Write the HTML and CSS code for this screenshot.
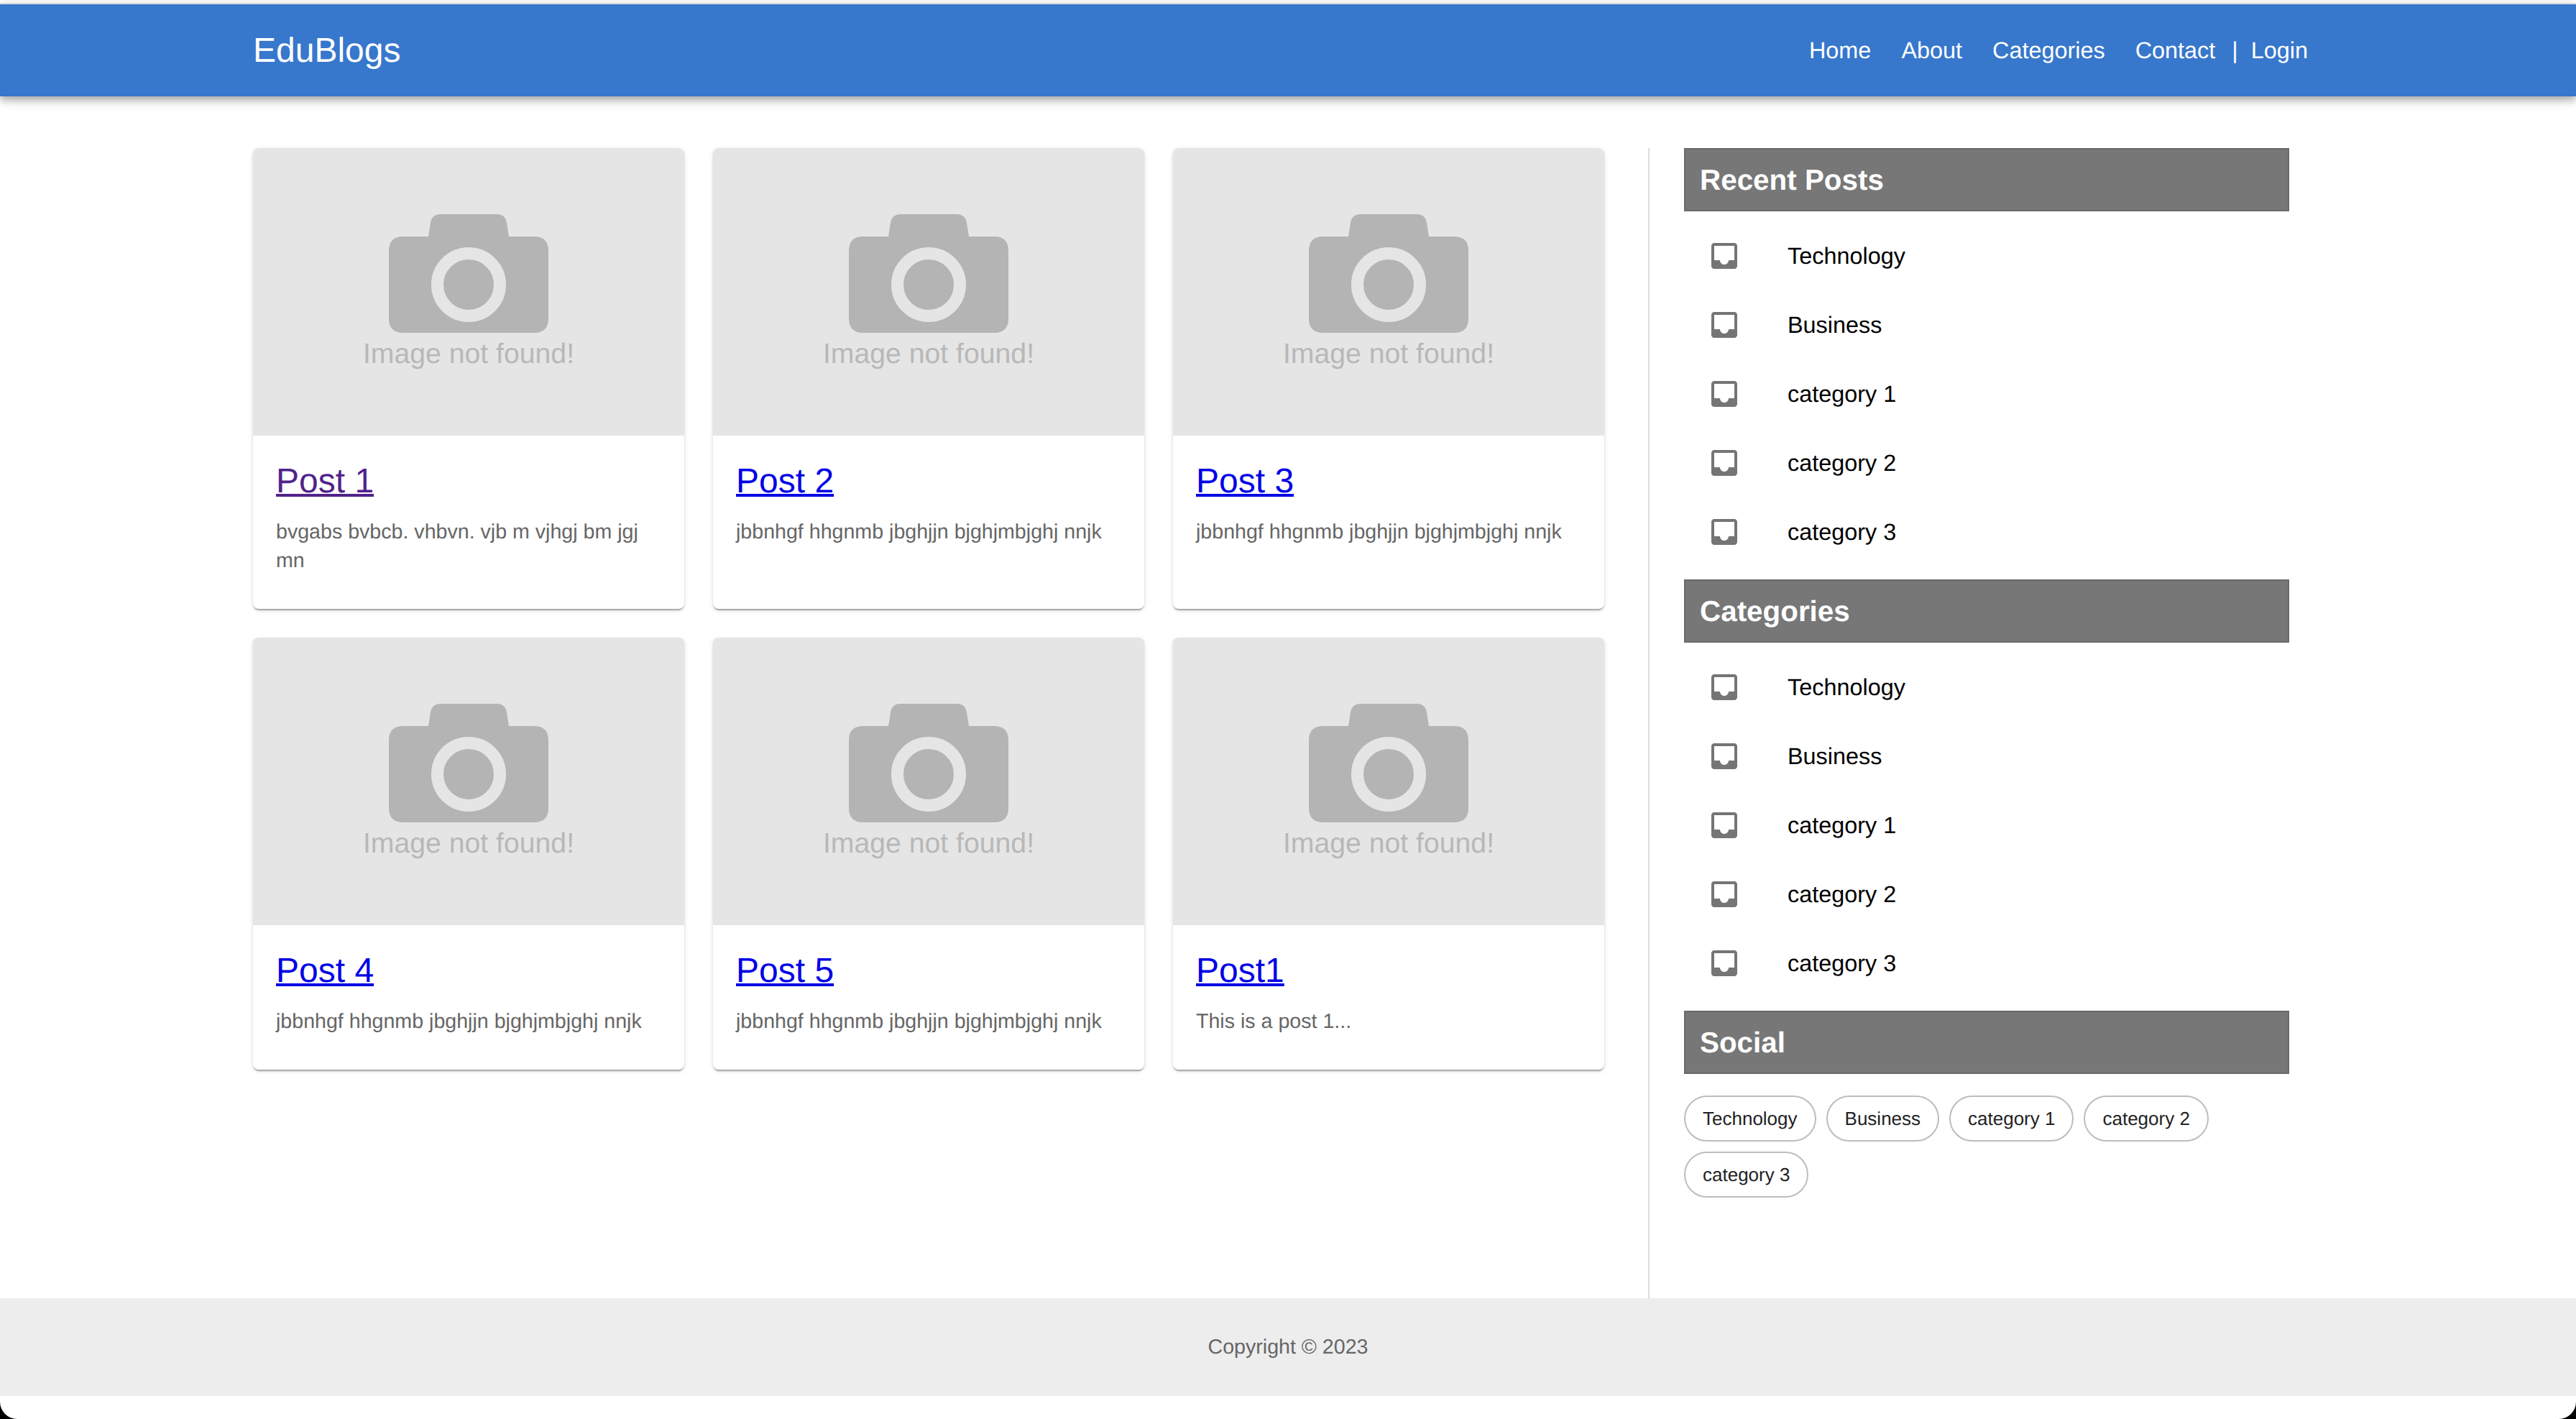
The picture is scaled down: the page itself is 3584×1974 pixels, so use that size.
FILE: index.html
```html
<!DOCTYPE html>
<html lang="en">
<head>
    <meta charset="UTF-8">
    <meta name="viewport" content="width=device-width, initial-scale=1.0">
    <title>EduBlogs</title>
    <link rel="stylesheet" href="styles.css">
</head>

<body>
    <svg class="defs" width="0" height="0">
        <symbol id="camara" viewBox="0 0 222 165">
            <path d="M20 31H55L58 12Q60 0 72 0H150Q162 0 164 12L167 31H202Q222 31 222 51V145Q222 165 202 165H20Q0 165 0 145V51Q0 31 20 31Z"/>
        </symbol>
        <symbol id="inbox" viewBox="0 0 24 24">
            <path d="M19 3H4.99c-1.11 0-1.98.89-1.98 2L3 19c0 1.1.88 2 1.99 2H19c1.1 0 2-.9 2-2V5c0-1.11-.9-2-2-2zm0 12h-4c0 1.66-1.35 3-3 3s-3-1.34-3-3H4.99V5H19v10z"/>
        </symbol>
    </svg>

    <header class="barra">
        <a href="#" class="logo">EduBlogs</a>
        <nav class="menu">
            <a href="#">Home</a>
            <a href="#">About</a>
            <a href="#">Categories</a>
            <a href="#">Contact</a>
            <span class="separador">|</span>
            <a href="#" class="login">Login</a>
        </nav>
    </header>

    <main class="principal">
        <section class="posts">
            <article class="tarjeta">
                <div class="imagen">
                    <svg class="camara"><use href="#camara"/><circle class="lente" cx="111" cy="98" r="43.5"/></svg>
                    <span>Image not found!</span>
                </div>
                <div class="cuerpo">
                    <h2><a href="#" class="visitado">Post 1</a></h2>
                    <p>bvgabs bvbcb. vhbvn. vjb m vjhgj bm jgj mn</p>
                </div>
            </article>
            <article class="tarjeta">
                <div class="imagen">
                    <svg class="camara"><use href="#camara"/><circle class="lente" cx="111" cy="98" r="43.5"/></svg>
                    <span>Image not found!</span>
                </div>
                <div class="cuerpo">
                    <h2><a href="#">Post 2</a></h2>
                    <p>jbbnhgf hhgnmb jbghjjn bjghjmbjghj nnjk</p>
                </div>
            </article>
            <article class="tarjeta">
                <div class="imagen">
                    <svg class="camara"><use href="#camara"/><circle class="lente" cx="111" cy="98" r="43.5"/></svg>
                    <span>Image not found!</span>
                </div>
                <div class="cuerpo">
                    <h2><a href="#">Post 3</a></h2>
                    <p>jbbnhgf hhgnmb jbghjjn bjghjmbjghj nnjk</p>
                </div>
            </article>
            <article class="tarjeta">
                <div class="imagen">
                    <svg class="camara"><use href="#camara"/><circle class="lente" cx="111" cy="98" r="43.5"/></svg>
                    <span>Image not found!</span>
                </div>
                <div class="cuerpo">
                    <h2><a href="#">Post 4</a></h2>
                    <p>jbbnhgf hhgnmb jbghjjn bjghjmbjghj nnjk</p>
                </div>
            </article>
            <article class="tarjeta">
                <div class="imagen">
                    <svg class="camara"><use href="#camara"/><circle class="lente" cx="111" cy="98" r="43.5"/></svg>
                    <span>Image not found!</span>
                </div>
                <div class="cuerpo">
                    <h2><a href="#">Post 5</a></h2>
                    <p>jbbnhgf hhgnmb jbghjjn bjghjmbjghj nnjk</p>
                </div>
            </article>
            <article class="tarjeta">
                <div class="imagen">
                    <svg class="camara"><use href="#camara"/><circle class="lente" cx="111" cy="98" r="43.5"/></svg>
                    <span>Image not found!</span>
                </div>
                <div class="cuerpo">
                    <h2><a href="#">Post1</a></h2>
                    <p>This is a post 1...</p>
                </div>
            </article>
        </section>

        <aside class="lateral">
            <h3 class="titulo">Recent Posts</h3>
            <ul class="lista">
                <li><svg class="icono"><use href="#inbox"/></svg>Technology</li>
                <li><svg class="icono"><use href="#inbox"/></svg>Business</li>
                <li><svg class="icono"><use href="#inbox"/></svg>category 1</li>
                <li><svg class="icono"><use href="#inbox"/></svg>category 2</li>
                <li><svg class="icono"><use href="#inbox"/></svg>category 3</li>
            </ul>

            <h3 class="titulo">Categories</h3>
            <ul class="lista">
                <li><svg class="icono"><use href="#inbox"/></svg>Technology</li>
                <li><svg class="icono"><use href="#inbox"/></svg>Business</li>
                <li><svg class="icono"><use href="#inbox"/></svg>category 1</li>
                <li><svg class="icono"><use href="#inbox"/></svg>category 2</li>
                <li><svg class="icono"><use href="#inbox"/></svg>category 3</li>
            </ul>

            <h3 class="titulo">Social</h3>
            <div class="chips">
                <span class="chip">Technology</span>
                <span class="chip">Business</span>
                <span class="chip">category 1</span>
                <span class="chip">category 2</span>
                <span class="chip">category 3</span>
            </div>
        </aside>
    </main>

    <footer class="pie">Copyright © 2023</footer>
</body>
</html>
```

FILE: styles.css
```css
html {
    height: 100%;
    background-color: #000;
}

body {
    font-family: "Liberation Sans", Arial, sans-serif;
    text-rendering: geometricPrecision;
    background-color: #fff;
    color: #000;
    margin: 0;
    padding: 4px 0 32px;
    height: 100%;
    box-sizing: border-box;
    display: flex;
    flex-direction: column;
    border-radius: 0 0 24px 24px;
}

.defs {
    position: absolute;
}

.barra {
    background-color: #3777cc;
    border-top: 2px solid #ddd;
    height: 128px;
    padding: 0 373px 0 352px;
    display: flex;
    align-items: center;
    justify-content: space-between;
    box-shadow: 0 4px 8px -2px rgba(0,0,0,0.2), 0 8px 10px rgba(0,0,0,0.14), 0 2px 20px rgba(0,0,0,0.12);
    position: relative;
}

.logo {
    color: #fff;
    font-size: 48px;
    text-decoration: none;
}

.menu {
    display: flex;
    align-items: center;
    font-size: 32.4px;
    color: #fff;
}

.menu a {
    color: #fff;
    text-decoration: none;
    margin-left: 42px;
}

.menu .separador {
    margin-left: 23px;
}

.menu .login {
    margin-left: 18px;
}

.principal {
    flex: 1;
    display: flex;
    padding: 72px 0 0 352px;
}

.posts {
    display: grid;
    grid-template-columns: repeat(3, 600px);
    gap: 40px;
    align-content: start;
}

.tarjeta {
    background-color: #fff;
    border-radius: 8px;
    overflow: hidden;
    box-shadow: 0 4px 2px -2px rgba(0,0,0,0.2), 0 2px 2px rgba(0,0,0,0.14), 0 2px 6px rgba(0,0,0,0.12);
}

.imagen {
    height: 400px;
    box-sizing: border-box;
    padding-top: 92px;
    background-color: #e5e5e5;
    color: #b8b8b8;
    font-size: 39.2px;
    line-height: 48px;
    text-align: center;
}

.imagen span {
    display: block;
    margin-top: 6px;
}

.camara {
    display: block;
    width: 222px;
    height: 165px;
    margin: 0 auto;
    fill: #b3b4b3;
}

.camara .lente {
    fill: none;
    stroke: #e5e5e5;
    stroke-width: 17px;
}

.cuerpo {
    padding: 36px 32px 47px;
}

.cuerpo h2 {
    margin: 0;
    font-size: 48px;
    line-height: 56px;
    font-weight: normal;
}

.cuerpo h2 a {
    color: #0000e6;
    text-decoration-thickness: 4px;
}

.cuerpo h2 a.visitado {
    color: #51228b;
}

.cuerpo p {
    margin: 22px 0 0;
    font-size: 28.6px;
    line-height: 40px;
    color: #666;
}

.lateral {
    margin-left: 61px;
    border-left: 2px solid #ddd;
    padding-left: 48px;
    width: 842px;
}

.titulo {
    margin: 0;
    height: 88px;
    box-sizing: border-box;
    padding-left: 20px;
    background-color: #777;
    border: 2px solid #696969;
    color: #fff;
    font-size: 40.4px;
    line-height: 85px;
}

.lista {
    list-style: none;
    margin: 14px 0 18px;
    padding: 0 0 0 32px;
    font-size: 32.4px;
}

.lista li {
    height: 96px;
    display: flex;
    align-items: center;
}

.icono {
    width: 48px;
    height: 48px;
    margin-right: 64px;
    fill: #757575;
}

.chips {
    display: flex;
    flex-wrap: wrap;
    gap: 14px;
    margin-top: 30px;
}

.chip {
    height: 64px;
    box-sizing: border-box;
    padding: 0 24px;
    border: 2px solid #bdbdbd;
    border-radius: 32px;
    font-size: 26px;
    line-height: 60px;
    color: #222;
}

.pie {
    height: 136px;
    flex-shrink: 0;
    background-color: #ededed;
    color: #666;
    font-size: 28.6px;
    line-height: 136px;
    text-align: center;
}
```
